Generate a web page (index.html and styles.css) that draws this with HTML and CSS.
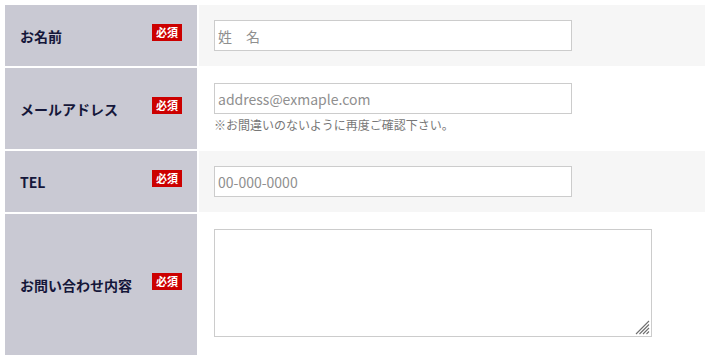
FILE: index.html
```html
<!DOCTYPE html>
<html lang="ja">
<head>
  <meta charset="UTF-8" />
  <meta name="viewport" content="width=device-width, initial-scale=1.0"/>
  <title>お問い合わせ</title>
  <link rel="stylesheet" href="styles.css">
</head>
<body>
  <form class="contact-form">
    <div class="form-row">
      <div class="form-label"><span>お名前</span><span class="required">必須</span></div>
      <div class="form-field shaded">
        <input type="text" class="text-input" placeholder="姓　名" />
      </div>
    </div>
    <div class="form-row">
      <div class="form-label"><span>メールアドレス</span><span class="required">必須</span></div>
      <div class="form-field">
        <input type="email" class="text-input" placeholder="address@exmaple.com" />
        <p class="note">※お間違いのないように再度ご確認下さい。</p>
      </div>
    </div>
    <div class="form-row">
      <div class="form-label"><span>TEL</span><span class="required">必須</span></div>
      <div class="form-field shaded">
        <input type="tel" class="text-input" placeholder="00-000-0000" />
      </div>
    </div>
    <div class="form-row">
      <div class="form-label"><span>お問い合わせ内容</span><span class="required">必須</span></div>
      <div class="form-field tall">
        <div class="textarea-wrap">
          <textarea class="text-area"></textarea>
          <svg class="grip" viewBox="0 0 15 15">
            <path d="M14 1L1 14M14 4.5L4.5 14M14 8L8 14M14 11.5L11.5 14"/>
          </svg>
        </div>
      </div>
    </div>
  </form>
</body>
</html>
```

FILE: styles.css
```css
* { margin: 0; padding: 0; box-sizing: border-box; }
body {
  font-family: "Noto Sans CJK JP", "Noto Sans", sans-serif;
  background: #fff;
  color: #333;
}
.contact-form {
  width: 710px;
  padding: 5px;
  display: flex;
  flex-direction: column;
  gap: 2px;
}
.form-row {
  display: grid;
  grid-template-columns: 192px 506px;
  gap: 2px;
}
.form-label {
  background: #c9c9d3;
  padding: 0 15px;
  display: flex;
  justify-content: space-between;
  align-items: center;
  font-size: 14px;
  font-weight: bold;
  color: #15173a;
}
.required {
  background: #cc0000;
  color: #fff;
  font-size: 11px;
  font-weight: bold;
  line-height: 17px;
  height: 17px;
  padding: 0 4px;
  margin-bottom: 6px;
}
.form-field {
  padding: 15px;
  background: #fff;
}
.form-field.shaded { background: #f6f6f6; }
.form-field.tall { padding-bottom: 18px; }
.text-input {
  display: block;
  width: 358px;
  height: 31px;
  padding: 0 3px;
  border: 1px solid #cccccc;
  background: #fff;
  font-family: inherit;
  font-size: 14px;
  color: #333;
}
.text-input::placeholder { color: #8f8f8f; }
.note {
  margin-top: 2px;
  font-size: 12px;
  line-height: 18px;
  color: #777;
}
.textarea-wrap {
  position: relative;
  width: 438px;
}
.text-area {
  display: block;
  width: 438px;
  height: 108px;
  border: 1px solid #cccccc;
  font-family: inherit;
  font-size: 14px;
  resize: none;
}
.grip {
  position: absolute;
  right: 2px;
  bottom: 2px;
  width: 15px;
  height: 15px;
  pointer-events: none;
  fill: none;
  stroke: #6f6f6f;
  stroke-width: 1.1;
}
```
